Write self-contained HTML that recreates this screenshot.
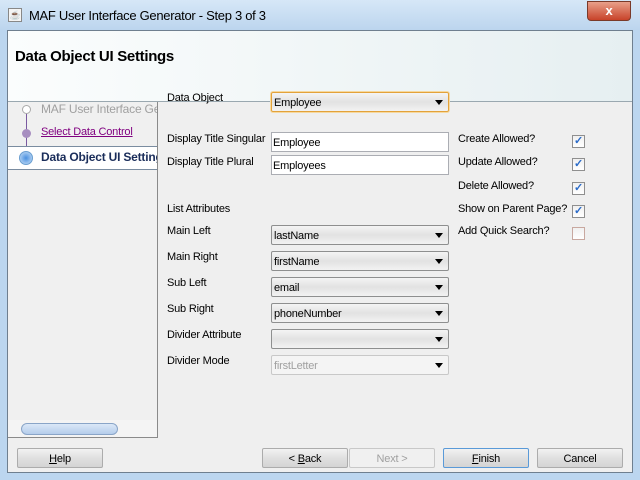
<!DOCTYPE html><html><head><style>
*{margin:0;padding:0;box-sizing:border-box}
body{width:640px;height:480px;overflow:hidden;background:#bcd6ef;font-family:"Liberation Sans",sans-serif;font-size:11px;letter-spacing:-0.2px;color:#000;position:relative}
.a{position:absolute;white-space:nowrap}
.combo{position:absolute;left:271px;width:178px;height:20px;border:1px solid #8e8f8f;border-radius:2px;background:linear-gradient(#f4f4f4,#e2e2e2 50%,#f2f2f2);padding:4px 0 0 2px}
.combo:after{content:"";position:absolute;right:5px;top:7px;border-left:4px solid transparent;border-right:4px solid transparent;border-top:5px solid #000}
.tf{position:absolute;left:271px;width:178px;height:20px;border:1px solid #abadb3;background:#fff;padding:4px 0 0 1px}
.cb{position:absolute;left:572px;width:13px;height:13px;border:1px solid #8f8f8f;background:linear-gradient(#f0f0f0,#fff);color:#2a6bc9;font-size:11px;line-height:11px;text-align:center;font-weight:bold}
.btn{position:absolute;top:448px;width:86px;height:20px;border:1px solid #acacac;border-radius:2px;background:linear-gradient(#f2f2f2,#e0e0e0 50%,#d4d4d4);text-align:center;padding-top:4px}
</style></head><body>
<div class="a" style="left:0;top:0;width:640px;height:30px;background:linear-gradient(#d6e7f7,#bcd5ee)"></div>
<div class="a" style="left:8px;top:8px;width:14px;height:14px;border:1px solid #888;background:#f4f4f4;font-size:9px;color:#c33;text-align:center;line-height:12px">☕</div>
<div class="a" style="left:29px;top:8px;font-size:13px;letter-spacing:-0.3px">MAF User Interface Generator - Step 3 of 3</div>
<div class="a" style="left:587px;top:1px;width:44px;height:20px;border:1px solid #7a3a2a;border-radius:0 0 4px 4px;background:linear-gradient(#e8a08a,#c8432a);color:#fff;font-weight:bold;text-align:center;font-size:13px;line-height:18px">x</div>
<div class="a" style="left:7px;top:30px;width:626px;height:443px;border:1px solid #6f7f8f;background:#efefef"></div>
<div class="a" style="left:8px;top:31px;width:624px;height:71px;background:linear-gradient(90deg,#fbfdfd,#e6eff1);border-bottom:1px solid #9aa8b0"></div>
<div class="a" style="left:15px;top:48px;font-size:15px;font-weight:bold;letter-spacing:-0.3px">Data Object UI Settings</div>
<div class="a" style="left:8px;top:102px;width:150px;height:336px;border-right:1px solid #8a8a8a;border-bottom:1px solid #8a8a8a;background:#f0f0f0;overflow:hidden">
<div class="a" style="left:18px;top:6px;width:1px;height:40px;background:#7a5aa0"></div>
<div class="a" style="left:14px;top:3px;width:9px;height:9px;border-radius:50%;border:1px solid #aaa;background:#fff"></div>
<div class="a" style="left:33px;top:0;color:#a0a0a0;font-size:12px">MAF User Interface Generator</div>
<div class="a" style="left:14px;top:27px;width:9px;height:9px;border-radius:50%;background:#a78ec0"></div>
<div class="a" style="left:33px;top:24px;color:#800080;text-decoration:underline">Select Data Control</div>
<div class="a" style="left:0;top:44px;width:150px;height:24px;background:#fff;border-top:1px solid #7a8ca0;border-bottom:1px solid #7a8ca0"></div>
<div class="a" style="left:11px;top:49px;width:14px;height:14px;border-radius:50%;border:1px solid #6a9ed0;background:radial-gradient(#4a90e0,#cde3f8)"></div>
<div class="a" style="left:33px;top:48px;color:#1a2d5a;font-weight:bold;font-size:12px">Data Object UI Settings</div>
<div class="a" style="left:0;top:318px;width:150px;height:18px;background:#f4f4f4"></div>
<div class="a" style="left:13px;top:321px;width:97px;height:12px;border-radius:6px;border:1px solid #8aa5c8;background:linear-gradient(#dbe8f8,#b5cdeb)"></div>
</div>
<div class="a" style="left:167px;top:92px">Data Object</div>
<div class="combo" style="top:92px;border:1px solid #e3a23a;box-shadow:0 0 0 1px #f6d9a0">Employee</div>
<div class="a" style="left:167px;top:133px">Display Title Singular</div>
<div class="tf" style="top:132px">Employee</div>
<div class="a" style="left:167px;top:156px">Display Title Plural</div>
<div class="tf" style="top:155px">Employees</div>
<div class="a" style="left:167px;top:203px">List Attributes</div>
<div class="a" style="left:167px;top:225px">Main Left</div><div class="combo" style="top:225px">lastName</div>
<div class="a" style="left:167px;top:251px">Main Right</div><div class="combo" style="top:251px">firstName</div>
<div class="a" style="left:167px;top:277px">Sub Left</div><div class="combo" style="top:277px">email</div>
<div class="a" style="left:167px;top:303px">Sub Right</div><div class="combo" style="top:303px">phoneNumber</div>
<div class="a" style="left:167px;top:329px">Divider Attribute</div><div class="combo" style="top:329px"></div>
<div class="a" style="left:167px;top:355px">Divider Mode</div><div class="combo" style="top:355px;color:#a0a0a0;border-color:#c8c8c8;background:#f4f4f4">firstLetter</div>
<div class="a" style="left:458px;top:133px">Create Allowed?</div><div class="cb" style="top:135px">✓</div>
<div class="a" style="left:458px;top:156px">Update Allowed?</div><div class="cb" style="top:158px">✓</div>
<div class="a" style="left:458px;top:180px">Delete Allowed?</div><div class="cb" style="top:182px">✓</div>
<div class="a" style="left:458px;top:203px">Show on Parent Page?</div><div class="cb" style="top:205px">✓</div>
<div class="a" style="left:458px;top:225px">Add Quick Search?</div><div class="cb" style="top:227px;border-color:#c8a8a0"></div>
<div class="btn" style="left:17px"><u>H</u>elp</div>
<div class="btn" style="left:262px">&lt; <u>B</u>ack</div>
<div class="btn" style="left:349px;color:#a0a0a0;background:#f0f0f0;border-color:#c8c8c8">Next &gt;</div>
<div class="btn" style="left:443px;border-color:#5a9ad8"><u>F</u>inish</div>
<div class="btn" style="left:537px">Cancel</div>
</body></html>
